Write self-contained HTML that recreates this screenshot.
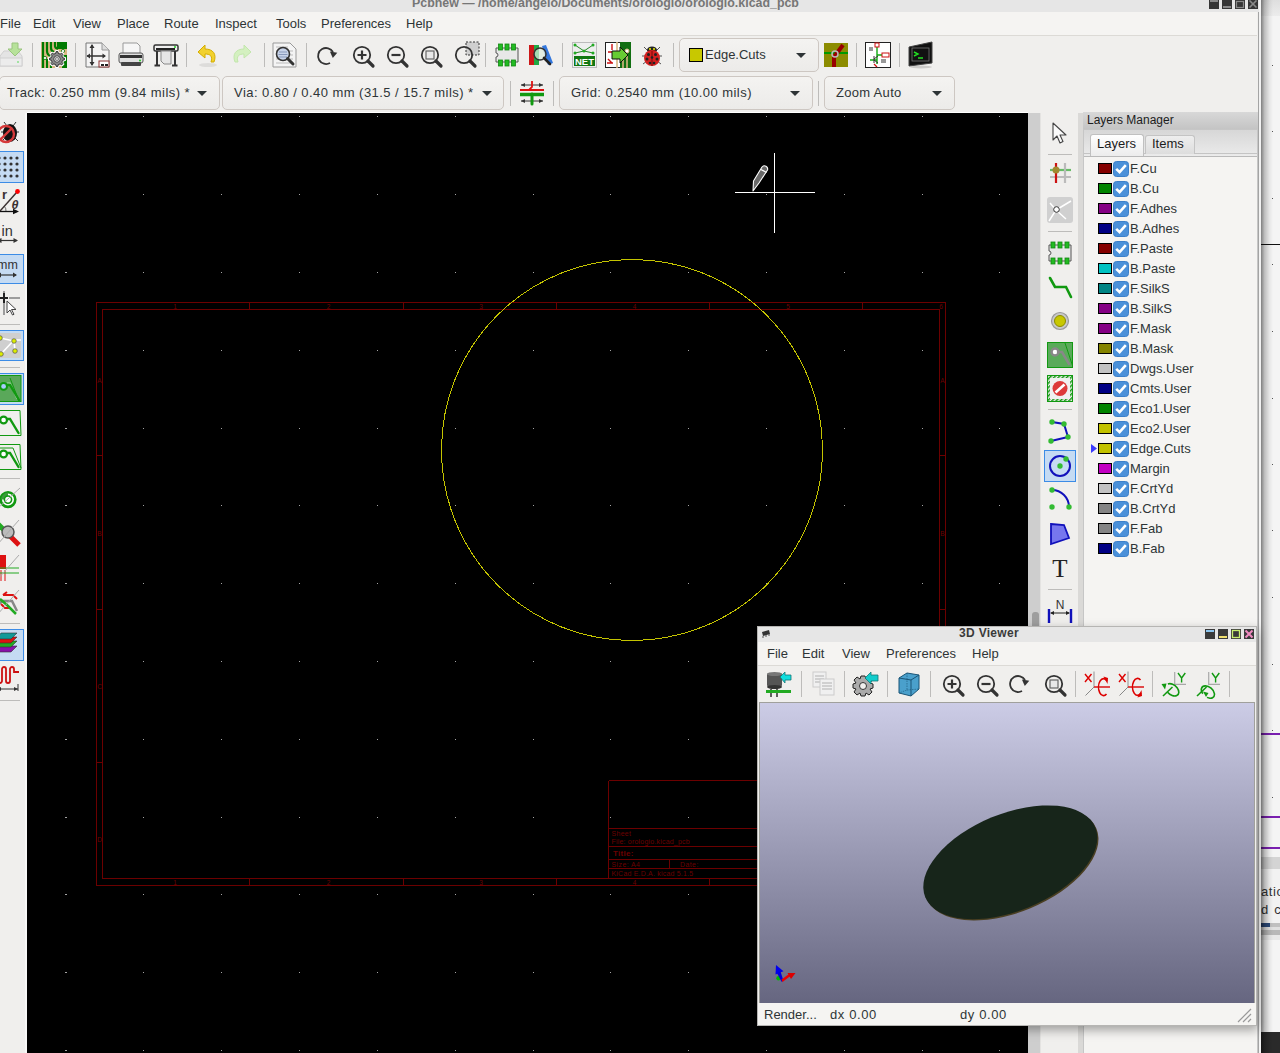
<!DOCTYPE html>
<html><head><meta charset="utf-8"><style>
html,body{margin:0;padding:0;width:1280px;height:1053px;overflow:hidden;background:#fff;font-family:"Liberation Sans", sans-serif;}
*{box-sizing:border-box;}
</style></head><body>
<div style="position:absolute;left:1259px;top:0px;width:21px;height:1053px;background:#f4f4f4"></div>
<div style="position:absolute;left:1261px;top:0px;width:19px;height:16px;background:linear-gradient(#dedede,#ececec)"></div>
<div style="position:absolute;left:1261px;top:244px;width:19px;height:1px;background:#111"></div>
<div style="position:absolute;left:1272px;top:65px;width:1px;height:1px;background:#555"></div>
<div style="position:absolute;left:1272px;top:131px;width:1px;height:1px;background:#555"></div>
<div style="position:absolute;left:1272px;top:198px;width:1px;height:1px;background:#555"></div>
<div style="position:absolute;left:1272px;top:264px;width:1px;height:1px;background:#555"></div>
<div style="position:absolute;left:1272px;top:331px;width:1px;height:1px;background:#555"></div>
<div style="position:absolute;left:1272px;top:398px;width:1px;height:1px;background:#555"></div>
<div style="position:absolute;left:1272px;top:464px;width:1px;height:1px;background:#555"></div>
<div style="position:absolute;left:1272px;top:530px;width:1px;height:1px;background:#555"></div>
<div style="position:absolute;left:1272px;top:597px;width:1px;height:1px;background:#555"></div>
<div style="position:absolute;left:1272px;top:664px;width:1px;height:1px;background:#555"></div>
<div style="position:absolute;left:1272px;top:730px;width:1px;height:1px;background:#555"></div>
<div style="position:absolute;left:1272px;top:797px;width:1px;height:1px;background:#555"></div>
<div style="position:absolute;left:1261px;top:733px;width:19px;height:2px;background:#7a1fb0"></div>
<div style="position:absolute;left:1261px;top:816px;width:19px;height:2px;background:#7a1fb0"></div>
<div style="position:absolute;left:1261px;top:847px;width:19px;height:2px;background:#7a1fb0"></div>
<div style="position:absolute;left:1261px;top:857px;width:19px;height:12px;background:#d4d4d4"></div>
<div style="position:absolute;left:1261px;top:869px;width:19px;height:60px;background:#f2f2f2"></div>
<div style="position:absolute;left:1261px;top:884px;font-size:13px;line-height:15px;color:#333;white-space:nowrap;letter-spacing:0.6px">atio</div>
<div style="position:absolute;left:1261px;top:902px;font-size:13px;line-height:15px;color:#333;white-space:nowrap;letter-spacing:1.2px">d c</div>
<div style="position:absolute;left:1261px;top:923px;width:19px;height:4px;background:#c0c0c0"></div>
<div style="position:absolute;left:1261px;top:923px;width:9px;height:4px;background:#2c4a7a"></div>
<div style="position:absolute;left:1261px;top:927px;width:19px;height:3px;background:#e0e0e0"></div>
<div style="position:absolute;left:1261px;top:930px;width:19px;height:5px;background:#b8b8b8"></div>
<div style="position:absolute;left:1261px;top:935px;width:19px;height:5px;background:#e8e8e8"></div>
<div style="position:absolute;left:1261px;top:1032px;width:19px;height:21px;background:#2a2a2a"></div>
<div style="position:absolute;left:1261px;top:0px;width:12px;height:1053px;background:linear-gradient(to right,rgba(0,0,0,0.48),rgba(0,0,0,0.22) 30%,rgba(0,0,0,0.06) 70%,rgba(0,0,0,0))"></div>
<div style="position:absolute;left:0px;top:0px;width:1259px;height:1053px;background:#f0efed"></div>
<div style="position:absolute;left:1258px;top:0px;width:1px;height:1053px;background:#a4a4a4"></div>
<div style="position:absolute;left:1259px;top:0px;width:2px;height:1053px;background:#f2f2f2"></div>
<div style="position:absolute;left:0px;top:0px;width:1259px;height:12px;background:#e6e6e6;overflow:hidden"></div>
<div style="position:absolute;left:412px;top:-4px;font-size:12.4px;line-height:14.4px;color:#767676;white-space:nowrap;font-weight:bold;">Pcbnew — /home/angelo/Documents/orologio/orologio.kicad_pcb</div>
<svg style="position:absolute;left:1209px;top:0px;" width="50" height="9" viewBox="0 0 50 9"><rect x="0" y="0" width="10" height="9" fill="#363636"/><rect x="1" y="0" width="8" height="2" fill="#8a8a8a"/><rect x="13" y="0" width="10" height="9" fill="#363636"/><rect x="14" y="6" width="8" height="2" fill="#8a8a8a"/><rect x="26" y="0" width="10" height="9" fill="#363636"/><rect x="27.5" y="1.5" width="7" height="6" fill="none" stroke="#8a8a8a" stroke-width="1.2"/><rect x="39" y="0" width="10" height="9" fill="#363636"/><path d="M40.5 0.5 L47.5 7.5 M47.5 0.5 L40.5 7.5" stroke="#8a8a8a" stroke-width="1.6"/></svg>
<div style="position:absolute;left:0px;top:12px;width:1257px;height:23px;background:#f5f4f2"></div>
<div style="position:absolute;left:0px;top:35px;width:1257px;height:1px;background:#dcdad6"></div>
<div style="position:absolute;left:0px;top:16px;font-size:13px;line-height:15px;color:#2e3436;white-space:nowrap;">File</div>
<div style="position:absolute;left:33px;top:16px;font-size:13px;line-height:15px;color:#2e3436;white-space:nowrap;">Edit</div>
<div style="position:absolute;left:73px;top:16px;font-size:13px;line-height:15px;color:#2e3436;white-space:nowrap;">View</div>
<div style="position:absolute;left:117px;top:16px;font-size:13px;line-height:15px;color:#2e3436;white-space:nowrap;">Place</div>
<div style="position:absolute;left:164px;top:16px;font-size:13px;line-height:15px;color:#2e3436;white-space:nowrap;">Route</div>
<div style="position:absolute;left:215px;top:16px;font-size:13px;line-height:15px;color:#2e3436;white-space:nowrap;">Inspect</div>
<div style="position:absolute;left:276px;top:16px;font-size:13px;line-height:15px;color:#2e3436;white-space:nowrap;">Tools</div>
<div style="position:absolute;left:321px;top:16px;font-size:13px;line-height:15px;color:#2e3436;white-space:nowrap;">Preferences</div>
<div style="position:absolute;left:406px;top:16px;font-size:13px;line-height:15px;color:#2e3436;white-space:nowrap;">Help</div>
<svg style="position:absolute;left:-2px;top:42px;" width="26" height="26" viewBox="0 0 26 26"><path d="M2 14 L6 9 H20 L24 14 V24 H2Z" fill="#e4e4e4" stroke="#cfcfcf"/><rect x="2" y="16" width="22" height="8" fill="#ececec" stroke="#d0d0d0"/><circle cx="20" cy="20" r="1" fill="#8be08b"/><path d="M14 1 H20 V7 H24 L17 14 L10 7 H14Z" fill="#b7e29a" stroke="#9ac47f" stroke-width="1"/></svg>
<div style="position:absolute;left:32px;top:43px;width:1px;height:24px;background:#bdbcba"></div>
<svg style="position:absolute;left:41px;top:42px;" width="26" height="26" viewBox="0 0 26 26"><rect x="0" y="0" width="26" height="26" fill="#d9b783"/><path d="M2 0 V26 M6 0 V9 Q6 13 10 14 M10 0 V6 Q10 9 13 10 M14 0 V4 Q14 6 17 7" stroke="#007a00" stroke-width="2.2" fill="none"/><path d="M6 17 V26 M10 20 V26" stroke="#007a00" stroke-width="2"/><rect x="16" y="0" width="10" height="7" fill="#007a00"/><rect x="21" y="13" width="5" height="13" fill="#007a00"/><circle cx="4" cy="16" r="1.6" fill="#fff" stroke="#007a00" stroke-width="0.8"/><circle cx="22" cy="9" r="1.6" fill="#fff" stroke="#007a00" stroke-width="0.8"/><path d="M22.05 15.65 L23.95 16.12 L23.95 17.88 L22.05 18.35 L21.23 20.32 L22.24 22.00 L21.00 23.24 L19.32 22.23 L17.35 23.05 L16.88 24.95 L15.12 24.95 L14.65 23.05 L12.68 22.23 L11.00 23.24 L9.76 22.00 L10.77 20.32 L9.95 18.35 L8.05 17.88 L8.05 16.12 L9.95 15.65 L10.77 13.68 L9.76 12.00 L11.00 10.76 L12.68 11.77 L14.65 10.95 L15.12 9.05 L16.88 9.05 L17.35 10.95 L19.32 11.77 L21.00 10.76 L22.24 12.00 L21.23 13.68Z" fill="#fff" stroke="#fff" stroke-width="2.2" stroke-linejoin="round"/><path d="M21.66 15.73 L23.45 16.18 L23.45 17.82 L21.66 18.27 L20.90 20.11 L21.85 21.69 L20.69 22.85 L19.11 21.90 L17.27 22.66 L16.82 24.45 L15.18 24.45 L14.73 22.66 L12.89 21.90 L11.31 22.85 L10.15 21.69 L11.10 20.11 L10.34 18.27 L8.55 17.82 L8.55 16.18 L10.34 15.73 L11.10 13.89 L10.15 12.31 L11.31 11.15 L12.89 12.10 L14.73 11.34 L15.18 9.55 L16.82 9.55 L17.27 11.34 L19.11 12.10 L20.69 11.15 L21.85 12.31 L20.90 13.89Z" fill="#8a8a8a" stroke="#222" stroke-width="0.9" stroke-linejoin="round"/><circle cx="16" cy="17" r="3.2" fill="#fff" stroke="#222" stroke-width="0.8"/><rect x="14.8" y="15.8" width="2.4" height="2.4" fill="none" stroke="#333" stroke-width="0.7"/></svg>
<div style="position:absolute;left:75px;top:43px;width:1px;height:24px;background:#bdbcba"></div>
<svg style="position:absolute;left:85px;top:42px;" width="26" height="26" viewBox="0 0 26 26"><path d="M1 1 H17 L24 8 V25 H1Z" fill="#f4f4f4" stroke="#777"/><path d="M17 1 V8 H24" fill="#ddd" stroke="#999"/><path d="M7 3 V23 M2 14 H20" stroke="#333" stroke-width="1.5"/><path d="M7 2 L4.5 6 H9.5Z M7 24 L4.5 20 H9.5Z M1.5 14 L5 11.5 V16.5Z M21 14 L17.5 11.5 V16.5Z" fill="#333"/><rect x="14" y="19" width="10" height="6" fill="#fff" stroke="#8a3030"/><path d="M16 23 H19 M20 23 H23" stroke="#222" stroke-width="2"/></svg>
<svg style="position:absolute;left:118px;top:42px;" width="26" height="26" viewBox="0 0 26 26"><path d="M5 1 H19 L22 4 V12 H5Z" fill="#f6f6f6" stroke="#999"/><rect x="1" y="11" width="24" height="10" rx="2" fill="#e0e0e0" stroke="#555"/><rect x="2" y="13" width="22" height="3" fill="#333"/><rect x="3" y="20" width="20" height="4" rx="1" fill="#444"/><circle cx="22" cy="18.5" r="1" fill="#2c2"/></svg>
<svg style="position:absolute;left:153px;top:42px;" width="26" height="26" viewBox="0 0 26 26"><rect x="1" y="3" width="24" height="6" rx="1.5" fill="#f0f0f0" stroke="#333" stroke-width="1.5"/><rect x="3" y="6" width="19" height="2" fill="#222"/><circle cx="22" cy="5" r="1" fill="#2c2"/><path d="M4 9 V23 M22 9 V23 M1.5 23.5 H7 M19 23.5 H24.5" stroke="#333" stroke-width="2"/><path d="M8 9 H18 V22 H11 L8 19Z" fill="#e6e6e6" stroke="#888"/></svg>
<div style="position:absolute;left:186px;top:43px;width:1px;height:24px;background:#bdbcba"></div>
<svg style="position:absolute;left:196px;top:42px;" width="24" height="26" viewBox="0 0 24 26"><ellipse cx="12" cy="23" rx="9" ry="2" fill="#000" opacity="0.08"/><path d="M2 10 L9 3 V7 C17 7 21 12 18 20 L15 20 C17 14 14 12 9 12 V16Z" fill="#f2d12e" stroke="#d4ad00" stroke-width="1"/></svg>
<svg style="position:absolute;left:229px;top:42px;" width="24" height="26" viewBox="0 0 24 26"><path d="M22 10 L15 3 V7 C7 7 3 12 6 20 L9 20 C7 14 10 12 15 12 V16Z" fill="#d4f0c0" stroke="#c2e6ac" stroke-width="1"/></svg>
<div style="position:absolute;left:264px;top:43px;width:1px;height:24px;background:#bdbcba"></div>
<svg style="position:absolute;left:272px;top:42px;" width="26" height="26" viewBox="0 0 26 26"><path d="M1 1 H18 L24 7 V25 H1Z" fill="#f4f4f4" stroke="#999"/><path d="M4 5 H16 M4 9 H21 M4 13 H21 M4 17 H21 M4 21 H21" stroke="#bbb"/><circle cx="11" cy="12" r="6.5" fill="#c8d4ea" stroke="#333" stroke-width="1.6"/><path d="M7 10 H15 M6.5 12.5 H15.5 M7 15 H15" stroke="#8899bb" stroke-width="1"/><path d="M15.5 16.5 L21 22" stroke="#333" stroke-width="3" stroke-linecap="round"/></svg>
<div style="position:absolute;left:306px;top:43px;width:1px;height:24px;background:#bdbcba"></div>
<svg style="position:absolute;left:316px;top:45px;" width="24" height="22" viewBox="0 0 24 22"><path d="M14 18 A8 8 0 1 1 17 7" fill="none" stroke="#333" stroke-width="1.8"/><path d="M13.5 7 H21 L17.5 13Z" fill="#333" transform="rotate(10 17 9)"/></svg>
<svg style="position:absolute;left:352px;top:45px;" width="24" height="24" viewBox="0 0 24 24"><circle cx="10" cy="10" r="8.2" fill="none" stroke="#333" stroke-width="1.8"/><path d="M5.5 10 H14.5 M10 5.5 V14.5" stroke="#333" stroke-width="2.2"/><path d="M16 16 L21 21" stroke="#333" stroke-width="3.2" stroke-linecap="round"/></svg>
<svg style="position:absolute;left:386px;top:45px;" width="24" height="24" viewBox="0 0 24 24"><circle cx="10" cy="10" r="8.2" fill="none" stroke="#333" stroke-width="1.8"/><path d="M5.5 10 H14.5" stroke="#333" stroke-width="2.2"/><path d="M16 16 L21 21" stroke="#333" stroke-width="3.2" stroke-linecap="round"/></svg>
<svg style="position:absolute;left:420px;top:45px;" width="24" height="24" viewBox="0 0 24 24"><circle cx="10" cy="10" r="8.2" fill="none" stroke="#333" stroke-width="1.8"/><rect x="6" y="6" width="8" height="8" fill="#e8e8e8" stroke="#666" stroke-width="1.2"/><path d="M16 16 L21 21" stroke="#333" stroke-width="3.2" stroke-linecap="round"/></svg>
<svg style="position:absolute;left:454px;top:41px;" width="26" height="28" viewBox="0 0 26 28"><rect x="12" y="1" width="13" height="13" fill="#cfcfcf" stroke="#333" stroke-dasharray="2 1.5"/><circle cx="10" cy="14" r="8.2" fill="none" stroke="#333" stroke-width="1.8"/><path d="M16 20 L21 25" stroke="#333" stroke-width="3.2" stroke-linecap="round"/></svg>
<div style="position:absolute;left:485px;top:43px;width:1px;height:24px;background:#bdbcba"></div>
<svg style="position:absolute;left:494px;top:43px;" width="26" height="24" viewBox="0 0 26 24"><path d="M2 5 H24 V19 H2 V14 A2 2 0 0 0 2 10Z" fill="#e8e8e8" stroke="#555" stroke-width="1"/><g fill="#22bb22" stroke="#128812" stroke-width="0.8"><rect x="4.5" y="1" width="4" height="6"/><rect x="11" y="1" width="4" height="6"/><rect x="17.5" y="1" width="4" height="6"/><rect x="4.5" y="17" width="4" height="6"/><rect x="11" y="17" width="4" height="6"/><rect x="17.5" y="17" width="4" height="6"/></g></svg>
<svg style="position:absolute;left:529px;top:43px;" width="26" height="24" viewBox="0 0 26 24"><rect x="0" y="2" width="5" height="20" fill="#cc1818"/><rect x="5" y="2" width="5" height="20" fill="#22aa44"/><path d="M13 3 L17 2 L24 20 L19 22Z" fill="#3377dd"/><circle cx="11" cy="11" r="6" fill="#ddeedd" fill-opacity="0.7" stroke="#333" stroke-width="1.5"/><path d="M15 15 L21 21" stroke="#222" stroke-width="2.6" stroke-linecap="round"/></svg>
<div style="position:absolute;left:562px;top:43px;width:1px;height:24px;background:#bdbcba"></div>
<svg style="position:absolute;left:572px;top:42px;" width="25" height="26" viewBox="0 0 25 26"><rect x="0.5" y="0.5" width="24" height="25" fill="#eeeeee" stroke="#bbb"/><path d="M3 3 L12 9 L21 3 M3 11 L12 9 L21 11" stroke="#228822" stroke-width="1" fill="none"/><circle cx="3" cy="3" r="1.5" fill="#22aa22"/><circle cx="21" cy="3" r="1.5" fill="#22aa22"/><circle cx="3" cy="11" r="1.5" fill="#22aa22"/><circle cx="21" cy="11" r="1.5" fill="#22aa22"/><circle cx="12" cy="9" r="1.5" fill="#22aa22"/><rect x="2" y="14" width="21" height="10" fill="#117711"/><text x="12.5" y="23" font-size="9.5" font-weight="bold" fill="#fff" text-anchor="middle" font-family="Liberation Sans">NET</text></svg>
<svg style="position:absolute;left:605px;top:42px;" width="26" height="26" viewBox="0 0 26 26"><rect x="0.5" y="0.5" width="25" height="25" fill="#fff" stroke="#222"/><rect x="15" y="0" width="11" height="26" fill="#116e11"/><path d="M12 0 V26 M18 14 V26 M22 14 V26" stroke="#d9b783" stroke-width="1.6"/><circle cx="22" cy="9" r="2" fill="#fff" stroke="#d9b783"/><path d="M7 2 V8 M3 10 H9 M3 17 L7 21 M2 21 H8" stroke="#cc1111" stroke-width="1.4"/><path d="M7 9 H15 V5 L23 13 L15 21 V17 H7Z" fill="#66cc33" stroke="#111" stroke-width="1"/></svg>
<svg style="position:absolute;left:640px;top:43px;" width="24" height="24" viewBox="0 0 24 24"><path d="M4 4 L8 8 M20 4 L16 8 M2 13 H6 M22 13 H18 M3 21 L7 18 M21 21 L17 18" stroke="#555" stroke-width="1"/><ellipse cx="12" cy="7" rx="5" ry="3.5" fill="#222"/><circle cx="10" cy="6" r="1" fill="#ee0"/><circle cx="14" cy="6" r="1" fill="#ee0"/><ellipse cx="12" cy="15" rx="8" ry="8" fill="#d42020"/><path d="M12 8 V23" stroke="#600" stroke-width="0.8"/><g fill="#222"><circle cx="8.5" cy="11.5" r="1.5"/><circle cx="15.5" cy="11.5" r="1.5"/><circle cx="7" cy="16" r="1.5"/><circle cx="17" cy="16" r="1.5"/><circle cx="10" cy="20" r="1.3"/><circle cx="14" cy="20" r="1.3"/><circle cx="12" cy="14.5" r="1.3"/></g></svg>
<div style="position:absolute;left:673px;top:43px;width:1px;height:24px;background:#bdbcba"></div>
<div style="position:absolute;left:679px;top:38px;width:140px;height:34px;border:1px solid #cdc7c2;border-radius:5px;background:linear-gradient(#f4f3f1,#ecebe9)"></div>
<div style="position:absolute;left:689px;top:48px;width:14px;height:14px;background:#c8c800;border:1px solid #000"></div>
<div style="position:absolute;left:705px;top:47px;font-size:13px;line-height:15px;color:#2e3436;white-space:nowrap;">Edge.Cuts</div>
<svg style="position:absolute;left:796px;top:53px;" width="10" height="5" viewBox="0 0 10 5"><path d="M0 0 H10 L5 5Z" fill="#2e3436"/></svg>
<svg style="position:absolute;left:824px;top:43px;" width="24" height="24" viewBox="0 0 24 24"><rect x="0" y="0" width="24" height="24" fill="#8c8c00"/><path d="M0 10 H24" stroke="#009900" stroke-width="2"/><path d="M10 24 V14 L19 2" stroke="#990000" stroke-width="4" fill="none"/><circle cx="11" cy="11" r="3" fill="none" stroke="#bbbbbb" stroke-width="1.5"/></svg>
<div style="position:absolute;left:856px;top:43px;width:1px;height:24px;background:#bdbcba"></div>
<svg style="position:absolute;left:865px;top:42px;" width="26" height="26" viewBox="0 0 26 26"><rect x="0.5" y="0.5" width="25" height="25" fill="#fff" stroke="#222"/><path d="M12 3 V22 M5 18 H12 M12 13 H17" stroke="#11aa11" stroke-width="1.4"/><rect x="10" y="1" width="4" height="4" fill="#fff" stroke="#cc1111"/><rect x="17" y="11" width="7" height="4" fill="#fff" stroke="#cc1111"/><path d="M9 14 V21 M9 17 L13 14 M9 18 L13 21 M4 6 H8 M4 8 H8 M16 18 H21 M16 20 H21" stroke="#333" stroke-width="1"/><path d="M9 22 L12 25" stroke="#cc1111" stroke-width="1.2"/></svg>
<div style="position:absolute;left:899px;top:43px;width:1px;height:24px;background:#bdbcba"></div>
<svg style="position:absolute;left:907px;top:41px;" width="28" height="28" viewBox="0 0 28 28"><path d="M2 6 L25 1 V22 L2 25Z" fill="#111" stroke="#444"/><rect x="5" y="7" width="17" height="13" fill="#111" stroke="#777" stroke-width="0.8"/><path d="M7 11 L11 13 L7 15 M11 17 H16" stroke="#22dd22" stroke-width="1.4" fill="none"/><ellipse cx="14" cy="26" rx="11" ry="1.5" fill="#000" opacity="0.15"/></svg>
<div style="position:absolute;left:-1px;top:76px;width:221px;height:34px;border:1px solid #cdc7c2;border-radius:5px;background:linear-gradient(#f4f3f1,#ecebe9)"></div>
<div style="position:absolute;left:7px;top:85px;font-size:13px;line-height:15px;color:#2e3436;white-space:nowrap;letter-spacing:0.45px">Track: 0.250 mm (9.84 mils) *</div>
<svg style="position:absolute;left:197px;top:91px;" width="10" height="5" viewBox="0 0 10 5"><path d="M0 0 H10 L5 5Z" fill="#2e3436"/></svg>
<div style="position:absolute;left:222px;top:76px;width:282px;height:34px;border:1px solid #cdc7c2;border-radius:5px;background:linear-gradient(#f4f3f1,#ecebe9)"></div>
<div style="position:absolute;left:234px;top:85px;font-size:13px;line-height:15px;color:#2e3436;white-space:nowrap;letter-spacing:0.45px">Via: 0.80 / 0.40 mm (31.5 / 15.7 mils) *</div>
<svg style="position:absolute;left:482px;top:91px;" width="10" height="5" viewBox="0 0 10 5"><path d="M0 0 H10 L5 5Z" fill="#2e3436"/></svg>
<div style="position:absolute;left:510px;top:81px;width:1px;height:25px;background:#bdbcba"></div>
<svg style="position:absolute;left:519px;top:79px;" width="26" height="28" viewBox="0 0 26 28"><path d="M2 6 H24 M2 22 H24" stroke="#333" stroke-width="1"/><path d="M2 6 L6 4 V8Z M24 6 L20 4 V8Z M2 22 L6 20 V24Z M24 22 L20 20 V24Z" fill="#333"/><path d="M13 2 V8 L10 11" stroke="#dd1111" stroke-width="1.8" fill="none"/><path d="M1 11 H25" stroke="#dd1111" stroke-width="2"/><path d="M1 15.5 H25" stroke="#119911" stroke-width="3.5"/><path d="M13 15 V25" stroke="#119911" stroke-width="3" stroke-linecap="round"/></svg>
<div style="position:absolute;left:553px;top:81px;width:1px;height:25px;background:#bdbcba"></div>
<div style="position:absolute;left:559px;top:76px;width:254px;height:34px;border:1px solid #cdc7c2;border-radius:5px;background:linear-gradient(#f4f3f1,#ecebe9)"></div>
<div style="position:absolute;left:571px;top:85px;font-size:13px;line-height:15px;color:#2e3436;white-space:nowrap;letter-spacing:0.45px">Grid: 0.2540 mm (10.00 mils)</div>
<svg style="position:absolute;left:790px;top:91px;" width="10" height="5" viewBox="0 0 10 5"><path d="M0 0 H10 L5 5Z" fill="#2e3436"/></svg>
<div style="position:absolute;left:818px;top:81px;width:1px;height:25px;background:#bdbcba"></div>
<div style="position:absolute;left:824px;top:76px;width:131px;height:34px;border:1px solid #cdc7c2;border-radius:5px;background:linear-gradient(#f4f3f1,#ecebe9)"></div>
<div style="position:absolute;left:836px;top:85px;font-size:13px;line-height:15px;color:#2e3436;white-space:nowrap;letter-spacing:0.3px">Zoom Auto</div>
<svg style="position:absolute;left:932px;top:91px;" width="10" height="5" viewBox="0 0 10 5"><path d="M0 0 H10 L5 5Z" fill="#2e3436"/></svg>
<div style="position:absolute;left:25px;top:113px;width:2px;height:940px;background:#f8f8f7"></div>
<svg style="position:absolute;left:-4px;top:119px;" width="26" height="26" viewBox="0 0 26 26"><path d="M8 3 L11 7 M20 3 L17 7 M5 13 H8 M23 13 H20 M6 22 L9 19 M22 22 L19 19" stroke="#333" stroke-width="1"/><ellipse cx="14" cy="14" rx="7" ry="9" fill="#111"/><circle cx="10" cy="15" r="8" fill="none" stroke="#d63a3a" stroke-width="2.4"/><path d="M4.5 20.5 L15.5 9.5" stroke="#d63a3a" stroke-width="2.4"/></svg>
<div style="position:absolute;left:-2px;top:151px;width:26px;height:32px;background:#c5dbf3;border:1px solid #3c8ce6"></div>
<svg style="position:absolute;left:-2px;top:153px;" width="26" height="28" viewBox="0 0 26 28"><g fill="#333"><circle cx="1" cy="5" r="1.6"/><circle cx="1" cy="11" r="1.6"/><circle cx="1" cy="17" r="1.6"/><circle cx="1" cy="23" r="1.6"/><circle cx="7" cy="5" r="1.6"/><circle cx="7" cy="11" r="1.6"/><circle cx="7" cy="17" r="1.6"/><circle cx="7" cy="23" r="1.6"/><circle cx="13" cy="5" r="1.6"/><circle cx="13" cy="11" r="1.6"/><circle cx="13" cy="17" r="1.6"/><circle cx="13" cy="23" r="1.6"/><circle cx="19" cy="5" r="1.6"/><circle cx="19" cy="11" r="1.6"/><circle cx="19" cy="17" r="1.6"/><circle cx="19" cy="23" r="1.6"/></g></svg>
<svg style="position:absolute;left:-3px;top:188px;" width="26" height="28" viewBox="0 0 26 28"><text x="5" y="11" font-size="13" font-weight="bold" fill="#3a3030" font-family="Liberation Sans">r</text><path d="M3 23 L20 4" stroke="#3a3030" stroke-width="1.5"/><circle cx="20.5" cy="3.5" r="2.4" fill="#f00"/><text x="14.5" y="21" font-size="12.5" font-weight="bold" font-style="italic" fill="#3a3030" font-family="Liberation Sans">θ</text><path d="M0 23.5 H20" stroke="#111" stroke-width="1.3"/><path d="M22 23.5 L16 20.8 V26.2Z" fill="#111"/><path d="M9 23 A6 6 0 0 0 7 18" fill="none" stroke="#333" stroke-width="0.7"/></svg>
<svg style="position:absolute;left:-3px;top:222px;" width="26" height="24" viewBox="0 0 26 24"><text x="4.5" y="13.5" font-size="14.5" fill="#333" font-family="Liberation Sans">in</text><path d="M1 18.5 H20" stroke="#333" stroke-width="1.2"/><path d="M0 18.5 L4.5 16 V21Z M21 18.5 L16.5 16 V21Z" fill="#333"/></svg>
<div style="position:absolute;left:-2px;top:254px;width:26px;height:30px;background:#c5dbf3;border:1px solid #3c8ce6"></div>
<svg style="position:absolute;left:-3px;top:255px;" width="26" height="28" viewBox="0 0 26 28"><text x="0" y="14" font-size="12.5" fill="#333" font-family="Liberation Sans">mm</text><path d="M1 20 H19" stroke="#333" stroke-width="1.2"/><path d="M0 20 L4 17.5 V22.5Z M20 20 L16 17.5 V22.5Z" fill="#333"/></svg>
<svg style="position:absolute;left:-2px;top:289px;" width="26" height="28" viewBox="0 0 26 28"><path d="M6 2 V26" stroke="#888" stroke-width="1.6"/><path d="M6 4 V14 M0 9 H10" stroke="#222" stroke-width="2"/><path d="M11 9 H22" stroke="#888" stroke-width="1.6"/><path d="M9 12 V24 L12 21 L14.5 26 L16 25.3 L13.5 20.5 H18Z" fill="#fff" stroke="#444" stroke-width="1"/></svg>
<div style="position:absolute;left:0px;top:324px;width:20px;height:1px;background:#bdbcba"></div>
<div style="position:absolute;left:-2px;top:330px;width:26px;height:31px;background:#c5dbf3;border:1px solid #3c8ce6"></div>
<svg style="position:absolute;left:-2px;top:332px;" width="26" height="28" viewBox="0 0 26 28"><rect x="0" y="1" width="23" height="25" rx="2" fill="#cfcfcf"/><path d="M2 6 L16 9 M3 22 L17 7 M16 9 L17 19 M14 8 L23 8" stroke="#fff" stroke-width="1.6"/><g fill="#ddee00" stroke="#555" stroke-width="0.7"><circle cx="2" cy="6" r="2.3"/><circle cx="16" cy="9" r="2.3"/><circle cx="3" cy="22" r="2.3"/><circle cx="17" cy="19" r="2.3"/></g></svg>
<div style="position:absolute;left:0px;top:367px;width:20px;height:1px;background:#bdbcba"></div>
<div style="position:absolute;left:-2px;top:373px;width:26px;height:32px;background:#c5dbf3;border:1px solid #3c8ce6"></div>
<svg style="position:absolute;left:-4px;top:374px;" width="26" height="30" viewBox="0 0 26 30"><rect x="-1" y="1.5" width="26" height="26" fill="#5aa85a" stroke="#119911"/><path d="M14 4 L23 27" stroke="#119911" stroke-width="1"/><path d="M11 9 H14 L21 25" fill="none" stroke="#a8d8a8" stroke-width="1.2"/><circle cx="7.6" cy="12.4" r="3.4" fill="#aaccff" stroke="#119911" stroke-width="2"/><path d="M11 11 H14 L23 26" fill="none" stroke="#119911" stroke-width="2.4" stroke-linecap="round"/></svg>
<svg style="position:absolute;left:-4px;top:408px;" width="26" height="30" viewBox="0 0 26 30"><path d="M-1 2.5 H24 L25 27.5 H-1" fill="none" stroke="#119911" stroke-width="1"/><circle cx="7.6" cy="12" r="3.4" fill="#fff" stroke="#119911" stroke-width="2.2"/><path d="M11 11 H14 L22.5 25" fill="none" stroke="#119911" stroke-width="2.4" stroke-linecap="round"/></svg>
<svg style="position:absolute;left:-4px;top:442px;" width="26" height="30" viewBox="0 0 26 30"><path d="M-1 2.5 H24 L25 27.5 H-1" fill="none" stroke="#119911" stroke-width="1"/><path d="M-1 6 H17 L25 26" fill="none" stroke="#119911" stroke-width="1"/><circle cx="7.6" cy="12" r="3.4" fill="#fff" stroke="#119911" stroke-width="2.2"/><path d="M11 11 H14 L22.5 25" fill="none" stroke="#119911" stroke-width="2.4" stroke-linecap="round"/></svg>
<div style="position:absolute;left:0px;top:478px;width:20px;height:1px;background:#bdbcba"></div>
<svg style="position:absolute;left:-2px;top:486px;" width="26" height="26" viewBox="0 0 26 26"><circle cx="10" cy="13.6" r="7.3" fill="#fff" stroke="#119911" stroke-width="2.6"/><path d="M3 13.6 A7 7 0 0 1 10 6.6 V10 A3.6 3.6 0 0 0 6.4 13.6Z" fill="#3a9a3a"/><circle cx="10" cy="13.6" r="3.6" fill="none" stroke="#119911" stroke-width="1.6"/><path d="M0 22 L22 2" stroke="#aaa" stroke-width="1"/></svg>
<svg style="position:absolute;left:-3px;top:519px;" width="26" height="30" viewBox="0 0 26 30"><path d="M0 4 L14 18" stroke="#22aa22" stroke-width="5"/><path d="M12 16 L22 26" stroke="#dd1111" stroke-width="5"/><circle cx="11" cy="13" r="6" fill="#bbb" stroke="#555" stroke-width="1.5"/><path d="M0 26 L22 1" stroke="#aaa" stroke-width="1"/></svg>
<svg style="position:absolute;left:-3px;top:554px;" width="26" height="30" viewBox="0 0 26 30"><rect x="3" y="1" width="6" height="14" fill="#dd1111"/><path d="M4 16 V27 M8 16 V27" stroke="#dd1111" stroke-width="1"/><path d="M0 14 H22 M0 19 H22" stroke="#22aa22" stroke-width="1.2"/><path d="M0 26 L22 1" stroke="#aaa" stroke-width="1"/></svg>
<svg style="position:absolute;left:-3px;top:589px;" width="26" height="28" viewBox="0 0 26 28"><path d="M6 6 L10 3 M6 6 L16 6 L20 10 M4 15 L8 19 L12 19" stroke="#dd1111" stroke-width="2" fill="none"/><path d="M0 17 L5 12 L15 12 L20 22" stroke="#888" stroke-width="2.5" fill="none"/><path d="M3 10 L10 16 L14 20 L19 25" stroke="#22aa22" stroke-width="2.5" fill="none"/><path d="M0 26 L22 1" stroke="#aaa" stroke-width="1"/></svg>
<div style="position:absolute;left:0px;top:623px;width:20px;height:1px;background:#bdbcba"></div>
<div style="position:absolute;left:-2px;top:629px;width:26px;height:32px;background:#c5dbf3;border:1px solid #3c8ce6"></div>
<svg style="position:absolute;left:-3px;top:630px;" width="26" height="30" viewBox="0 0 26 30"><path d="M4 16 L20 16 L14 22 L0 22Z" fill="#8811aa" stroke="#333" stroke-width="0.6"/><path d="M4 11 L20 11 L14 17 L0 17Z" fill="#22aa22" stroke="#333" stroke-width="0.6"/><path d="M4 7 L20 7 L14 13 L0 13Z" fill="#dd1111" stroke="#333" stroke-width="0.6"/><path d="M4 3 L20 3 L14 9 L0 9Z" fill="#119999" stroke="#333" stroke-width="0.6"/></svg>
<svg style="position:absolute;left:-3px;top:664px;" width="26" height="30" viewBox="0 0 26 30"><path d="M1 11 V17 A2 2 0 0 0 5 17 V5 A2 2 0 0 1 9 5 V17 A2 2 0 0 0 13 17 V5 A2 2 0 0 1 17 5 V8 H22" fill="none" stroke="#cc1111" stroke-width="1.8"/><path d="M0 25 H21 M21 20 V27" stroke="#333" stroke-width="1"/><path d="M0 25 L4 23 V27Z M21 25 L17 23 V27Z" fill="#333"/></svg>
<div style="position:absolute;left:0px;top:700px;width:20px;height:1px;background:#bdbcba"></div>
<div style="position:absolute;left:27px;top:112px;width:1001px;height:1px;background:#ffffff"></div>
<div style="position:absolute;left:27px;top:113px;width:1001px;height:940px;background:#000000"></div>
<svg style="position:absolute;left:27px;top:113px" width="1001" height="940" viewBox="0 0 1001 940" shape-rendering="crispEdges"><rect x="38" y="3" width="2" height="1" fill="#a4a4a4"/><rect x="116" y="3" width="1" height="1" fill="#a4a4a4"/><rect x="194" y="3" width="1" height="1" fill="#a4a4a4"/><rect x="272" y="3" width="1" height="1" fill="#a4a4a4"/><rect x="350" y="3" width="1" height="1" fill="#a4a4a4"/><rect x="428" y="3" width="1" height="1" fill="#a4a4a4"/><rect x="506" y="3" width="1" height="1" fill="#a4a4a4"/><rect x="583" y="3" width="1" height="1" fill="#a4a4a4"/><rect x="661" y="3" width="1" height="1" fill="#a4a4a4"/><rect x="739" y="3" width="1" height="1" fill="#a4a4a4"/><rect x="817" y="3" width="1" height="1" fill="#a4a4a4"/><rect x="895" y="3" width="1" height="1" fill="#a4a4a4"/><rect x="972" y="3" width="1" height="1" fill="#a4a4a4"/><rect x="38" y="81" width="2" height="1" fill="#a4a4a4"/><rect x="116" y="81" width="1" height="1" fill="#a4a4a4"/><rect x="194" y="81" width="1" height="1" fill="#a4a4a4"/><rect x="272" y="81" width="1" height="1" fill="#a4a4a4"/><rect x="350" y="81" width="1" height="1" fill="#a4a4a4"/><rect x="428" y="81" width="1" height="1" fill="#a4a4a4"/><rect x="506" y="81" width="1" height="1" fill="#a4a4a4"/><rect x="583" y="81" width="1" height="1" fill="#a4a4a4"/><rect x="661" y="81" width="1" height="1" fill="#a4a4a4"/><rect x="739" y="81" width="1" height="1" fill="#a4a4a4"/><rect x="817" y="81" width="1" height="1" fill="#a4a4a4"/><rect x="895" y="81" width="1" height="1" fill="#a4a4a4"/><rect x="972" y="81" width="1" height="1" fill="#a4a4a4"/><rect x="38" y="159" width="2" height="1" fill="#a4a4a4"/><rect x="116" y="159" width="1" height="1" fill="#a4a4a4"/><rect x="194" y="159" width="1" height="1" fill="#a4a4a4"/><rect x="272" y="159" width="1" height="1" fill="#a4a4a4"/><rect x="350" y="159" width="1" height="1" fill="#a4a4a4"/><rect x="428" y="159" width="1" height="1" fill="#a4a4a4"/><rect x="506" y="159" width="1" height="1" fill="#a4a4a4"/><rect x="583" y="159" width="1" height="1" fill="#a4a4a4"/><rect x="661" y="159" width="1" height="1" fill="#a4a4a4"/><rect x="739" y="159" width="1" height="1" fill="#a4a4a4"/><rect x="817" y="159" width="1" height="1" fill="#a4a4a4"/><rect x="895" y="159" width="1" height="1" fill="#a4a4a4"/><rect x="972" y="159" width="1" height="1" fill="#a4a4a4"/><rect x="38" y="237" width="2" height="1" fill="#a4a4a4"/><rect x="116" y="237" width="1" height="1" fill="#a4a4a4"/><rect x="194" y="237" width="1" height="1" fill="#a4a4a4"/><rect x="272" y="237" width="1" height="1" fill="#a4a4a4"/><rect x="350" y="237" width="1" height="1" fill="#a4a4a4"/><rect x="428" y="237" width="1" height="1" fill="#a4a4a4"/><rect x="506" y="237" width="1" height="1" fill="#a4a4a4"/><rect x="583" y="237" width="1" height="1" fill="#a4a4a4"/><rect x="661" y="237" width="1" height="1" fill="#a4a4a4"/><rect x="739" y="237" width="1" height="1" fill="#a4a4a4"/><rect x="817" y="237" width="1" height="1" fill="#a4a4a4"/><rect x="895" y="237" width="1" height="1" fill="#a4a4a4"/><rect x="972" y="237" width="1" height="1" fill="#a4a4a4"/><rect x="38" y="315" width="2" height="1" fill="#a4a4a4"/><rect x="116" y="315" width="1" height="1" fill="#a4a4a4"/><rect x="194" y="315" width="1" height="1" fill="#a4a4a4"/><rect x="272" y="315" width="1" height="1" fill="#a4a4a4"/><rect x="350" y="315" width="1" height="1" fill="#a4a4a4"/><rect x="428" y="315" width="1" height="1" fill="#a4a4a4"/><rect x="506" y="315" width="1" height="1" fill="#a4a4a4"/><rect x="583" y="315" width="1" height="1" fill="#a4a4a4"/><rect x="661" y="315" width="1" height="1" fill="#a4a4a4"/><rect x="739" y="315" width="1" height="1" fill="#a4a4a4"/><rect x="817" y="315" width="1" height="1" fill="#a4a4a4"/><rect x="895" y="315" width="1" height="1" fill="#a4a4a4"/><rect x="972" y="315" width="1" height="1" fill="#a4a4a4"/><rect x="38" y="392" width="2" height="1" fill="#a4a4a4"/><rect x="116" y="392" width="1" height="1" fill="#a4a4a4"/><rect x="194" y="392" width="1" height="1" fill="#a4a4a4"/><rect x="272" y="392" width="1" height="1" fill="#a4a4a4"/><rect x="350" y="392" width="1" height="1" fill="#a4a4a4"/><rect x="428" y="392" width="1" height="1" fill="#a4a4a4"/><rect x="506" y="392" width="1" height="1" fill="#a4a4a4"/><rect x="583" y="392" width="1" height="1" fill="#a4a4a4"/><rect x="661" y="392" width="1" height="1" fill="#a4a4a4"/><rect x="739" y="392" width="1" height="1" fill="#a4a4a4"/><rect x="817" y="392" width="1" height="1" fill="#a4a4a4"/><rect x="895" y="392" width="1" height="1" fill="#a4a4a4"/><rect x="972" y="392" width="1" height="1" fill="#a4a4a4"/><rect x="38" y="470" width="2" height="1" fill="#a4a4a4"/><rect x="116" y="470" width="1" height="1" fill="#a4a4a4"/><rect x="194" y="470" width="1" height="1" fill="#a4a4a4"/><rect x="272" y="470" width="1" height="1" fill="#a4a4a4"/><rect x="350" y="470" width="1" height="1" fill="#a4a4a4"/><rect x="428" y="470" width="1" height="1" fill="#a4a4a4"/><rect x="506" y="470" width="1" height="1" fill="#a4a4a4"/><rect x="583" y="470" width="1" height="1" fill="#a4a4a4"/><rect x="661" y="470" width="1" height="1" fill="#a4a4a4"/><rect x="739" y="470" width="1" height="1" fill="#a4a4a4"/><rect x="817" y="470" width="1" height="1" fill="#a4a4a4"/><rect x="895" y="470" width="1" height="1" fill="#a4a4a4"/><rect x="972" y="470" width="1" height="1" fill="#a4a4a4"/><rect x="38" y="548" width="2" height="1" fill="#a4a4a4"/><rect x="116" y="548" width="1" height="1" fill="#a4a4a4"/><rect x="194" y="548" width="1" height="1" fill="#a4a4a4"/><rect x="272" y="548" width="1" height="1" fill="#a4a4a4"/><rect x="350" y="548" width="1" height="1" fill="#a4a4a4"/><rect x="428" y="548" width="1" height="1" fill="#a4a4a4"/><rect x="506" y="548" width="1" height="1" fill="#a4a4a4"/><rect x="583" y="548" width="1" height="1" fill="#a4a4a4"/><rect x="661" y="548" width="1" height="1" fill="#a4a4a4"/><rect x="739" y="548" width="1" height="1" fill="#a4a4a4"/><rect x="817" y="548" width="1" height="1" fill="#a4a4a4"/><rect x="895" y="548" width="1" height="1" fill="#a4a4a4"/><rect x="972" y="548" width="1" height="1" fill="#a4a4a4"/><rect x="38" y="626" width="2" height="1" fill="#a4a4a4"/><rect x="116" y="626" width="1" height="1" fill="#a4a4a4"/><rect x="194" y="626" width="1" height="1" fill="#a4a4a4"/><rect x="272" y="626" width="1" height="1" fill="#a4a4a4"/><rect x="350" y="626" width="1" height="1" fill="#a4a4a4"/><rect x="428" y="626" width="1" height="1" fill="#a4a4a4"/><rect x="506" y="626" width="1" height="1" fill="#a4a4a4"/><rect x="583" y="626" width="1" height="1" fill="#a4a4a4"/><rect x="661" y="626" width="1" height="1" fill="#a4a4a4"/><rect x="739" y="626" width="1" height="1" fill="#a4a4a4"/><rect x="817" y="626" width="1" height="1" fill="#a4a4a4"/><rect x="895" y="626" width="1" height="1" fill="#a4a4a4"/><rect x="972" y="626" width="1" height="1" fill="#a4a4a4"/><rect x="38" y="704" width="2" height="1" fill="#a4a4a4"/><rect x="116" y="704" width="1" height="1" fill="#a4a4a4"/><rect x="194" y="704" width="1" height="1" fill="#a4a4a4"/><rect x="272" y="704" width="1" height="1" fill="#a4a4a4"/><rect x="350" y="704" width="1" height="1" fill="#a4a4a4"/><rect x="428" y="704" width="1" height="1" fill="#a4a4a4"/><rect x="506" y="704" width="1" height="1" fill="#a4a4a4"/><rect x="583" y="704" width="1" height="1" fill="#a4a4a4"/><rect x="661" y="704" width="1" height="1" fill="#a4a4a4"/><rect x="739" y="704" width="1" height="1" fill="#a4a4a4"/><rect x="817" y="704" width="1" height="1" fill="#a4a4a4"/><rect x="895" y="704" width="1" height="1" fill="#a4a4a4"/><rect x="972" y="704" width="1" height="1" fill="#a4a4a4"/><rect x="38" y="781" width="2" height="1" fill="#a4a4a4"/><rect x="116" y="781" width="1" height="1" fill="#a4a4a4"/><rect x="194" y="781" width="1" height="1" fill="#a4a4a4"/><rect x="272" y="781" width="1" height="1" fill="#a4a4a4"/><rect x="350" y="781" width="1" height="1" fill="#a4a4a4"/><rect x="428" y="781" width="1" height="1" fill="#a4a4a4"/><rect x="506" y="781" width="1" height="1" fill="#a4a4a4"/><rect x="583" y="781" width="1" height="1" fill="#a4a4a4"/><rect x="661" y="781" width="1" height="1" fill="#a4a4a4"/><rect x="739" y="781" width="1" height="1" fill="#a4a4a4"/><rect x="817" y="781" width="1" height="1" fill="#a4a4a4"/><rect x="895" y="781" width="1" height="1" fill="#a4a4a4"/><rect x="972" y="781" width="1" height="1" fill="#a4a4a4"/><rect x="38" y="859" width="2" height="1" fill="#a4a4a4"/><rect x="116" y="859" width="1" height="1" fill="#a4a4a4"/><rect x="194" y="859" width="1" height="1" fill="#a4a4a4"/><rect x="272" y="859" width="1" height="1" fill="#a4a4a4"/><rect x="350" y="859" width="1" height="1" fill="#a4a4a4"/><rect x="428" y="859" width="1" height="1" fill="#a4a4a4"/><rect x="506" y="859" width="1" height="1" fill="#a4a4a4"/><rect x="583" y="859" width="1" height="1" fill="#a4a4a4"/><rect x="661" y="859" width="1" height="1" fill="#a4a4a4"/><rect x="739" y="859" width="1" height="1" fill="#a4a4a4"/><rect x="817" y="859" width="1" height="1" fill="#a4a4a4"/><rect x="895" y="859" width="1" height="1" fill="#a4a4a4"/><rect x="972" y="859" width="1" height="1" fill="#a4a4a4"/><rect x="38" y="937" width="2" height="1" fill="#a4a4a4"/><rect x="116" y="937" width="1" height="1" fill="#a4a4a4"/><rect x="194" y="937" width="1" height="1" fill="#a4a4a4"/><rect x="272" y="937" width="1" height="1" fill="#a4a4a4"/><rect x="350" y="937" width="1" height="1" fill="#a4a4a4"/><rect x="428" y="937" width="1" height="1" fill="#a4a4a4"/><rect x="506" y="937" width="1" height="1" fill="#a4a4a4"/><rect x="583" y="937" width="1" height="1" fill="#a4a4a4"/><rect x="661" y="937" width="1" height="1" fill="#a4a4a4"/><rect x="739" y="937" width="1" height="1" fill="#a4a4a4"/><rect x="817" y="937" width="1" height="1" fill="#a4a4a4"/><rect x="895" y="937" width="1" height="1" fill="#a4a4a4"/><rect x="972" y="937" width="1" height="1" fill="#a4a4a4"/><rect x="69.5" y="189.5" width="849" height="583" fill="none" stroke="#6c0000" stroke-width="1"/><rect x="75.5" y="196.5" width="837" height="569" fill="none" stroke="#6c0000" stroke-width="1"/><line x1="222.5" y1="189.5" x2="222.5" y2="196.5" stroke="#6c0000" stroke-width="1"/><line x1="222.5" y1="765.5" x2="222.5" y2="772.5" stroke="#6c0000" stroke-width="1"/><line x1="376.5" y1="189.5" x2="376.5" y2="196.5" stroke="#6c0000" stroke-width="1"/><line x1="376.5" y1="765.5" x2="376.5" y2="772.5" stroke="#6c0000" stroke-width="1"/><line x1="529.5" y1="189.5" x2="529.5" y2="196.5" stroke="#6c0000" stroke-width="1"/><line x1="529.5" y1="765.5" x2="529.5" y2="772.5" stroke="#6c0000" stroke-width="1"/><line x1="682.5" y1="189.5" x2="682.5" y2="196.5" stroke="#6c0000" stroke-width="1"/><line x1="682.5" y1="765.5" x2="682.5" y2="772.5" stroke="#6c0000" stroke-width="1"/><line x1="835.5" y1="189.5" x2="835.5" y2="196.5" stroke="#6c0000" stroke-width="1"/><line x1="835.5" y1="765.5" x2="835.5" y2="772.5" stroke="#6c0000" stroke-width="1"/><line x1="69.5" y1="342.5" x2="75.5" y2="342.5" stroke="#6c0000" stroke-width="1"/><line x1="912.5" y1="342.5" x2="918.5" y2="342.5" stroke="#6c0000" stroke-width="1"/><line x1="69.5" y1="496.5" x2="75.5" y2="496.5" stroke="#6c0000" stroke-width="1"/><line x1="912.5" y1="496.5" x2="918.5" y2="496.5" stroke="#6c0000" stroke-width="1"/><line x1="69.5" y1="649.5" x2="75.5" y2="649.5" stroke="#6c0000" stroke-width="1"/><line x1="912.5" y1="649.5" x2="918.5" y2="649.5" stroke="#6c0000" stroke-width="1"/><line x1="581.5" y1="667.5" x2="918" y2="667.5" stroke="#6c0000" stroke-width="1"/><line x1="581.5" y1="667.5" x2="581.5" y2="765.5" stroke="#6c0000" stroke-width="1"/><line x1="581.5" y1="715.5" x2="918" y2="715.5" stroke="#6c0000" stroke-width="1"/><line x1="581.5" y1="733.5" x2="918" y2="733.5" stroke="#6c0000" stroke-width="1"/><line x1="581.5" y1="746.5" x2="918" y2="746.5" stroke="#6c0000" stroke-width="1"/><line x1="581.5" y1="755.5" x2="918" y2="755.5" stroke="#6c0000" stroke-width="1"/><line x1="642.5" y1="746.5" x2="642.5" y2="755.5" stroke="#6c0000" stroke-width="1"/><g shape-rendering="crispEdges"></g><circle cx="605" cy="337" r="190.5" fill="none" stroke="#c4c400" stroke-width="1"/><text x="148" y="195.5" font-size="6.5" font-weight="normal" fill="#6c0000" font-family="Liberation Sans" text-anchor="middle" letter-spacing="0">1</text><text x="148" y="772" font-size="6.5" font-weight="normal" fill="#6c0000" font-family="Liberation Sans" text-anchor="middle" letter-spacing="0">1</text><text x="301.5" y="195.5" font-size="6.5" font-weight="normal" fill="#6c0000" font-family="Liberation Sans" text-anchor="middle" letter-spacing="0">2</text><text x="301.5" y="772" font-size="6.5" font-weight="normal" fill="#6c0000" font-family="Liberation Sans" text-anchor="middle" letter-spacing="0">2</text><text x="454" y="195.5" font-size="6.5" font-weight="normal" fill="#6c0000" font-family="Liberation Sans" text-anchor="middle" letter-spacing="0">3</text><text x="454" y="772" font-size="6.5" font-weight="normal" fill="#6c0000" font-family="Liberation Sans" text-anchor="middle" letter-spacing="0">3</text><text x="607.5" y="195.5" font-size="6.5" font-weight="normal" fill="#6c0000" font-family="Liberation Sans" text-anchor="middle" letter-spacing="0">4</text><text x="607.5" y="772" font-size="6.5" font-weight="normal" fill="#6c0000" font-family="Liberation Sans" text-anchor="middle" letter-spacing="0">4</text><text x="761" y="195.5" font-size="6.5" font-weight="normal" fill="#6c0000" font-family="Liberation Sans" text-anchor="middle" letter-spacing="0">5</text><text x="761" y="772" font-size="6.5" font-weight="normal" fill="#6c0000" font-family="Liberation Sans" text-anchor="middle" letter-spacing="0">5</text><text x="914" y="195.5" font-size="6.5" font-weight="normal" fill="#6c0000" font-family="Liberation Sans" text-anchor="middle" letter-spacing="0">6</text><text x="914" y="772" font-size="6.5" font-weight="normal" fill="#6c0000" font-family="Liberation Sans" text-anchor="middle" letter-spacing="0">6</text><text x="72.5" y="270" font-size="6.5" font-weight="normal" fill="#6c0000" font-family="Liberation Sans" text-anchor="middle" letter-spacing="0">A</text><text x="915.5" y="270" font-size="6.5" font-weight="normal" fill="#6c0000" font-family="Liberation Sans" text-anchor="middle" letter-spacing="0">A</text><text x="72.5" y="423" font-size="6.5" font-weight="normal" fill="#6c0000" font-family="Liberation Sans" text-anchor="middle" letter-spacing="0">B</text><text x="915.5" y="423" font-size="6.5" font-weight="normal" fill="#6c0000" font-family="Liberation Sans" text-anchor="middle" letter-spacing="0">B</text><text x="72.5" y="576" font-size="6.5" font-weight="normal" fill="#6c0000" font-family="Liberation Sans" text-anchor="middle" letter-spacing="0">C</text><text x="915.5" y="576" font-size="6.5" font-weight="normal" fill="#6c0000" font-family="Liberation Sans" text-anchor="middle" letter-spacing="0">C</text><text x="72.5" y="729" font-size="6.5" font-weight="normal" fill="#6c0000" font-family="Liberation Sans" text-anchor="middle" letter-spacing="0">D</text><text x="915.5" y="729" font-size="6.5" font-weight="normal" fill="#6c0000" font-family="Liberation Sans" text-anchor="middle" letter-spacing="0">D</text><text x="584.5" y="723" font-size="7" font-weight="normal" fill="#6c0000" font-family="Liberation Sans" text-anchor="start" letter-spacing="0.3">Sheet</text><text x="584.5" y="731" font-size="7" font-weight="normal" fill="#6c0000" font-family="Liberation Sans" text-anchor="start" letter-spacing="0.2">File: orologio.kicad_pcb</text><text x="586" y="742.5" font-size="8" font-weight="bold" fill="#6c0000" font-family="Liberation Sans" text-anchor="start" letter-spacing="0.3">Title:</text><text x="584.5" y="753.5" font-size="7" font-weight="normal" fill="#6c0000" font-family="Liberation Sans" text-anchor="start" letter-spacing="0.4">Size: A4</text><text x="653" y="753.5" font-size="7" font-weight="normal" fill="#6c0000" font-family="Liberation Sans" text-anchor="start" letter-spacing="0.4">Date:</text><text x="584.5" y="762.5" font-size="7" font-weight="normal" fill="#6c0000" font-family="Liberation Sans" text-anchor="start" letter-spacing="0.2">KiCad E.D.A.  kicad 5.1.5</text><g transform="translate(726,78)"><path d="M0 0 L0.5 -10 L9 -24 A3.2 3.2 0 0 1 14.5 -21 L6 -8Z" fill="#6a6a6a" stroke="#fff" stroke-width="1.1" stroke-linejoin="round" shape-rendering="geometricPrecision"/><path d="M8 -21.5 L13.5 -18.5" stroke="#fff" stroke-width="1.3" shape-rendering="geometricPrecision"/></g><line x1="747.5" y1="40" x2="747.5" y2="120" stroke="#fff" stroke-width="1"/><line x1="708" y1="79.5" x2="788" y2="79.5" stroke="#fff" stroke-width="1"/></svg>
<div style="position:absolute;left:1028px;top:113px;width:12px;height:940px;background:#cecece"></div>
<div style="position:absolute;left:1040px;top:113px;width:38px;height:940px;background:#f0efed"></div>
<div style="position:absolute;left:1078px;top:113px;width:5px;height:940px;background:#dad9d7"></div>
<div style="position:absolute;left:1040px;top:113px;width:1px;height:940px;background:#e4e3e1"></div>
<svg style="position:absolute;left:1050px;top:121px;" width="20" height="24" viewBox="0 0 20 24"><path d="M3 2 V19 L7 15 L10 22 L13 20.5 L10 14 H16Z" fill="#fafafa" stroke="#444" stroke-width="1.1" stroke-linejoin="round"/></svg>
<div style="position:absolute;left:1048px;top:154px;width:24px;height:1px;background:#bdbcba"></div>
<svg style="position:absolute;left:1047px;top:161px;" width="26" height="24" viewBox="0 0 26 24"><path d="M3 9 H24" stroke="#66bb66" stroke-width="2.2"/><path d="M3 16 H24 M18 2 V22" stroke="#bbbbbb" stroke-width="2.2"/><path d="M9 2 V22" stroke="#cc1111" stroke-width="2.2"/><circle cx="9" cy="9" r="3.5" fill="#a08a30"/></svg>
<svg style="position:absolute;left:1047px;top:197px;" width="26" height="26" viewBox="0 0 26 26"><rect x="0" y="0" width="26" height="26" rx="3" fill="#d0d0d0"/><path d="M2 24 L9 13 M9 13 L24 4 M9 13 L19 22 M9 13 L3 6" stroke="#fff" stroke-width="1.5"/><circle cx="9.5" cy="12.5" r="2.8" fill="#fff" stroke="#333" stroke-width="1"/></svg>
<div style="position:absolute;left:1048px;top:231px;width:24px;height:1px;background:#bdbcba"></div>
<svg style="position:absolute;left:1047px;top:241px;" width="26" height="24" viewBox="0 0 26 24"><path d="M2 4 H24 V20 H2 V14 A2 2 0 0 0 2 10Z" fill="#e8e8e8" stroke="#555" stroke-width="1"/><g fill="#22bb22" stroke="#128812" stroke-width="0.8"><rect x="4" y="1" width="4" height="6"/><rect x="11" y="1" width="4" height="6"/><rect x="18" y="1" width="4" height="6"/><rect x="4" y="17" width="4" height="6"/><rect x="11" y="17" width="4" height="6"/><rect x="18" y="17" width="4" height="6"/></g></svg>
<svg style="position:absolute;left:1047px;top:275px;" width="26" height="26" viewBox="0 0 26 26"><path d="M3 3 L8 12 H19 L24 22" fill="none" stroke="#119911" stroke-width="2.6" stroke-linecap="round"/></svg>
<svg style="position:absolute;left:1048px;top:310px;" width="24" height="22" viewBox="0 0 24 22"><circle cx="12" cy="11" r="8.5" fill="#c8c8c8" stroke="#999" stroke-width="1.2"/><circle cx="12" cy="11" r="5.5" fill="#c8c800" stroke="#8c8c00" stroke-width="1"/></svg>
<svg style="position:absolute;left:1047px;top:342px;" width="26" height="26" viewBox="0 0 26 26"><rect x="0.5" y="0.5" width="25" height="25" fill="#5aaa5a" stroke="#119911"/><path d="M18 1 L26 25" stroke="#119911" stroke-width="1"/><circle cx="8" cy="10" r="3.5" fill="#fff" stroke="#888" stroke-width="2.5"/><path d="M11 10 H15 L22 22" fill="none" stroke="#888" stroke-width="2.5" stroke-linecap="round"/></svg>
<svg style="position:absolute;left:1047px;top:375px;" width="26" height="27" viewBox="0 0 26 27"><defs><pattern id="hatch" width="3" height="3" patternUnits="userSpaceOnUse" patternTransform="rotate(45)"><rect width="1.5" height="3" fill="#119911"/></pattern></defs><rect x="0.5" y="0.5" width="25" height="26" fill="url(#hatch)" stroke="#119911"/><rect x="3" y="3" width="20" height="21" fill="#f0f0f0"/><circle cx="13" cy="13.5" r="7.5" fill="#dd3a3a"/><path d="M8.5 17.5 L17.5 9.5" stroke="#fff" stroke-width="2.6"/></svg>
<div style="position:absolute;left:1048px;top:409px;width:24px;height:1px;background:#bdbcba"></div>
<svg style="position:absolute;left:1047px;top:419px;" width="26" height="26" viewBox="0 0 26 26"><path d="M5 3 L17 5 L21 18 L4 22" fill="none" stroke="#1111bb" stroke-width="2"/><g fill="#33bb33"><circle cx="5" cy="3" r="2.7"/><circle cx="17" cy="5" r="2.7"/><circle cx="21" cy="18" r="2.7"/><circle cx="4" cy="22" r="2.7"/></g></svg>
<div style="position:absolute;left:1044px;top:450px;width:32px;height:32px;background:#c5dbf3;border:1px solid #3c8ce6"></div>
<svg style="position:absolute;left:1047px;top:452px;" width="26" height="28" viewBox="0 0 26 28"><circle cx="13" cy="14" r="10" fill="none" stroke="#1111bb" stroke-width="2"/><circle cx="13" cy="14" r="2.7" fill="#33bb33"/><circle cx="19" cy="7" r="2.7" fill="#33bb33"/></svg>
<svg style="position:absolute;left:1047px;top:487px;" width="26" height="26" viewBox="0 0 26 26"><path d="M5 3 A17 17 0 0 1 22 20" fill="none" stroke="#1111bb" stroke-width="2"/><g fill="#33bb33"><circle cx="5" cy="3" r="2.7"/><circle cx="22" cy="20" r="2.7"/><circle cx="5" cy="20" r="2.7"/></g></svg>
<svg style="position:absolute;left:1047px;top:522px;" width="26" height="24" viewBox="0 0 26 24"><path d="M4 2 L17 3 L22 16 L4 22Z" fill="#7777ee" stroke="#1111bb" stroke-width="1.8"/></svg>
<svg style="position:absolute;left:1047px;top:556px;" width="26" height="24" viewBox="0 0 26 24"><text x="13" y="21" font-size="25" font-family="Liberation Serif" text-anchor="middle" fill="#222">T</text></svg>
<div style="position:absolute;left:1048px;top:589px;width:24px;height:1px;background:#bdbcba"></div>
<svg style="position:absolute;left:1045px;top:598px;" width="30" height="26" viewBox="0 0 30 26"><text x="15" y="11" font-size="12" font-family="Liberation Sans" text-anchor="middle" fill="#333">N</text><path d="M4 11 V25 M26 11 V25" stroke="#1111bb" stroke-width="2.4"/><path d="M6 15 H24" stroke="#222" stroke-width="1"/><path d="M5 15 L9 13 V17Z M25 15 L21 13 V17Z" fill="#222"/></svg>
<div style="position:absolute;left:1032px;top:612px;width:7px;height:30px;background:#9e9e9e;border-radius:3px"></div>
<div style="position:absolute;left:1083px;top:112px;width:175px;height:941px;background:#f5f4f2"></div>
<div style="position:absolute;left:1083px;top:112px;width:175px;height:17px;background:linear-gradient(#d8d8d8,#c4c4c4)"></div>
<div style="position:absolute;left:1087px;top:113px;font-size:12px;line-height:14px;color:#1c1c1c;white-space:nowrap;">Layers Manager</div>
<div style="position:absolute;left:1083px;top:129px;width:175px;height:27px;background:linear-gradient(#d6d6d6,#ebebeb)"></div>
<div style="position:absolute;left:1083px;top:153px;width:175px;height:1px;background:#c4c4c4"></div>
<div style="position:absolute;left:1083px;top:156px;width:175px;height:1px;background:#b9b9b9"></div>
<div style="position:absolute;left:1083px;top:129px;width:1px;height:924px;background:#c6c6c6"></div>
<div style="position:absolute;left:1257px;top:129px;width:1px;height:924px;background:#c6c6c6"></div>
<div style="position:absolute;left:1083px;top:129px;width:175px;height:1px;background:#c6c6c6"></div>
<div style="position:absolute;left:1090px;top:134px;width:54px;height:22px;background:linear-gradient(#ffffff,#ececec);border:1px solid #c0c0c0;border-bottom:none;border-radius:3px 3px 0 0"></div>
<div style="position:absolute;left:1097px;top:136px;font-size:13px;line-height:15px;color:#1c1c1c;white-space:nowrap;">Layers</div>
<div style="position:absolute;left:1145px;top:135px;width:50px;height:19px;background:linear-gradient(#eeeeee,#dddddd);border:1px solid #c4c4c4;border-bottom:none;border-radius:3px 3px 0 0"></div>
<div style="position:absolute;left:1152px;top:136px;font-size:13px;line-height:15px;color:#1c1c1c;white-space:nowrap;">Items</div>
<div style="position:absolute;left:1098px;top:163px;width:14px;height:11px;background:#840000;border:1px solid #000"></div>
<svg style="position:absolute;left:1113px;top:161px;" width="16" height="16" viewBox="0 0 16 16"><rect x="0.5" y="0.5" width="15" height="15" rx="3" fill="#4a90d9" stroke="#3b7fc9"/><path d="M3.2 7.8 L6.6 11.2 L12.8 4.2" fill="none" stroke="#fff" stroke-width="2.6"/></svg>
<div style="position:absolute;left:1130px;top:161px;font-size:13px;line-height:15px;color:#2e3436;white-space:nowrap;">F.Cu</div>
<div style="position:absolute;left:1098px;top:183px;width:14px;height:11px;background:#008400;border:1px solid #000"></div>
<svg style="position:absolute;left:1113px;top:181px;" width="16" height="16" viewBox="0 0 16 16"><rect x="0.5" y="0.5" width="15" height="15" rx="3" fill="#4a90d9" stroke="#3b7fc9"/><path d="M3.2 7.8 L6.6 11.2 L12.8 4.2" fill="none" stroke="#fff" stroke-width="2.6"/></svg>
<div style="position:absolute;left:1130px;top:181px;font-size:13px;line-height:15px;color:#2e3436;white-space:nowrap;">B.Cu</div>
<div style="position:absolute;left:1098px;top:203px;width:14px;height:11px;background:#840084;border:1px solid #000"></div>
<svg style="position:absolute;left:1113px;top:201px;" width="16" height="16" viewBox="0 0 16 16"><rect x="0.5" y="0.5" width="15" height="15" rx="3" fill="#4a90d9" stroke="#3b7fc9"/><path d="M3.2 7.8 L6.6 11.2 L12.8 4.2" fill="none" stroke="#fff" stroke-width="2.6"/></svg>
<div style="position:absolute;left:1130px;top:201px;font-size:13px;line-height:15px;color:#2e3436;white-space:nowrap;">F.Adhes</div>
<div style="position:absolute;left:1098px;top:223px;width:14px;height:11px;background:#000084;border:1px solid #000"></div>
<svg style="position:absolute;left:1113px;top:221px;" width="16" height="16" viewBox="0 0 16 16"><rect x="0.5" y="0.5" width="15" height="15" rx="3" fill="#4a90d9" stroke="#3b7fc9"/><path d="M3.2 7.8 L6.6 11.2 L12.8 4.2" fill="none" stroke="#fff" stroke-width="2.6"/></svg>
<div style="position:absolute;left:1130px;top:221px;font-size:13px;line-height:15px;color:#2e3436;white-space:nowrap;">B.Adhes</div>
<div style="position:absolute;left:1098px;top:243px;width:14px;height:11px;background:#840000;border:1px solid #000"></div>
<svg style="position:absolute;left:1113px;top:241px;" width="16" height="16" viewBox="0 0 16 16"><rect x="0.5" y="0.5" width="15" height="15" rx="3" fill="#4a90d9" stroke="#3b7fc9"/><path d="M3.2 7.8 L6.6 11.2 L12.8 4.2" fill="none" stroke="#fff" stroke-width="2.6"/></svg>
<div style="position:absolute;left:1130px;top:241px;font-size:13px;line-height:15px;color:#2e3436;white-space:nowrap;">F.Paste</div>
<div style="position:absolute;left:1098px;top:263px;width:14px;height:11px;background:#00c2c2;border:1px solid #000"></div>
<svg style="position:absolute;left:1113px;top:261px;" width="16" height="16" viewBox="0 0 16 16"><rect x="0.5" y="0.5" width="15" height="15" rx="3" fill="#4a90d9" stroke="#3b7fc9"/><path d="M3.2 7.8 L6.6 11.2 L12.8 4.2" fill="none" stroke="#fff" stroke-width="2.6"/></svg>
<div style="position:absolute;left:1130px;top:261px;font-size:13px;line-height:15px;color:#2e3436;white-space:nowrap;">B.Paste</div>
<div style="position:absolute;left:1098px;top:283px;width:14px;height:11px;background:#008484;border:1px solid #000"></div>
<svg style="position:absolute;left:1113px;top:281px;" width="16" height="16" viewBox="0 0 16 16"><rect x="0.5" y="0.5" width="15" height="15" rx="3" fill="#4a90d9" stroke="#3b7fc9"/><path d="M3.2 7.8 L6.6 11.2 L12.8 4.2" fill="none" stroke="#fff" stroke-width="2.6"/></svg>
<div style="position:absolute;left:1130px;top:281px;font-size:13px;line-height:15px;color:#2e3436;white-space:nowrap;">F.SilkS</div>
<div style="position:absolute;left:1098px;top:303px;width:14px;height:11px;background:#840084;border:1px solid #000"></div>
<svg style="position:absolute;left:1113px;top:301px;" width="16" height="16" viewBox="0 0 16 16"><rect x="0.5" y="0.5" width="15" height="15" rx="3" fill="#4a90d9" stroke="#3b7fc9"/><path d="M3.2 7.8 L6.6 11.2 L12.8 4.2" fill="none" stroke="#fff" stroke-width="2.6"/></svg>
<div style="position:absolute;left:1130px;top:301px;font-size:13px;line-height:15px;color:#2e3436;white-space:nowrap;">B.SilkS</div>
<div style="position:absolute;left:1098px;top:323px;width:14px;height:11px;background:#840084;border:1px solid #000"></div>
<svg style="position:absolute;left:1113px;top:321px;" width="16" height="16" viewBox="0 0 16 16"><rect x="0.5" y="0.5" width="15" height="15" rx="3" fill="#4a90d9" stroke="#3b7fc9"/><path d="M3.2 7.8 L6.6 11.2 L12.8 4.2" fill="none" stroke="#fff" stroke-width="2.6"/></svg>
<div style="position:absolute;left:1130px;top:321px;font-size:13px;line-height:15px;color:#2e3436;white-space:nowrap;">F.Mask</div>
<div style="position:absolute;left:1098px;top:343px;width:14px;height:11px;background:#848400;border:1px solid #000"></div>
<svg style="position:absolute;left:1113px;top:341px;" width="16" height="16" viewBox="0 0 16 16"><rect x="0.5" y="0.5" width="15" height="15" rx="3" fill="#4a90d9" stroke="#3b7fc9"/><path d="M3.2 7.8 L6.6 11.2 L12.8 4.2" fill="none" stroke="#fff" stroke-width="2.6"/></svg>
<div style="position:absolute;left:1130px;top:341px;font-size:13px;line-height:15px;color:#2e3436;white-space:nowrap;">B.Mask</div>
<div style="position:absolute;left:1098px;top:363px;width:14px;height:11px;background:#c2c2c2;border:1px solid #000"></div>
<svg style="position:absolute;left:1113px;top:361px;" width="16" height="16" viewBox="0 0 16 16"><rect x="0.5" y="0.5" width="15" height="15" rx="3" fill="#4a90d9" stroke="#3b7fc9"/><path d="M3.2 7.8 L6.6 11.2 L12.8 4.2" fill="none" stroke="#fff" stroke-width="2.6"/></svg>
<div style="position:absolute;left:1130px;top:361px;font-size:13px;line-height:15px;color:#2e3436;white-space:nowrap;">Dwgs.User</div>
<div style="position:absolute;left:1098px;top:383px;width:14px;height:11px;background:#000084;border:1px solid #000"></div>
<svg style="position:absolute;left:1113px;top:381px;" width="16" height="16" viewBox="0 0 16 16"><rect x="0.5" y="0.5" width="15" height="15" rx="3" fill="#4a90d9" stroke="#3b7fc9"/><path d="M3.2 7.8 L6.6 11.2 L12.8 4.2" fill="none" stroke="#fff" stroke-width="2.6"/></svg>
<div style="position:absolute;left:1130px;top:381px;font-size:13px;line-height:15px;color:#2e3436;white-space:nowrap;">Cmts.User</div>
<div style="position:absolute;left:1098px;top:403px;width:14px;height:11px;background:#008400;border:1px solid #000"></div>
<svg style="position:absolute;left:1113px;top:401px;" width="16" height="16" viewBox="0 0 16 16"><rect x="0.5" y="0.5" width="15" height="15" rx="3" fill="#4a90d9" stroke="#3b7fc9"/><path d="M3.2 7.8 L6.6 11.2 L12.8 4.2" fill="none" stroke="#fff" stroke-width="2.6"/></svg>
<div style="position:absolute;left:1130px;top:401px;font-size:13px;line-height:15px;color:#2e3436;white-space:nowrap;">Eco1.User</div>
<div style="position:absolute;left:1098px;top:423px;width:14px;height:11px;background:#c2c200;border:1px solid #000"></div>
<svg style="position:absolute;left:1113px;top:421px;" width="16" height="16" viewBox="0 0 16 16"><rect x="0.5" y="0.5" width="15" height="15" rx="3" fill="#4a90d9" stroke="#3b7fc9"/><path d="M3.2 7.8 L6.6 11.2 L12.8 4.2" fill="none" stroke="#fff" stroke-width="2.6"/></svg>
<div style="position:absolute;left:1130px;top:421px;font-size:13px;line-height:15px;color:#2e3436;white-space:nowrap;">Eco2.User</div>
<div style="position:absolute;left:1098px;top:443px;width:14px;height:11px;background:#c2c200;border:1px solid #000"></div>
<svg style="position:absolute;left:1113px;top:441px;" width="16" height="16" viewBox="0 0 16 16"><rect x="0.5" y="0.5" width="15" height="15" rx="3" fill="#4a90d9" stroke="#3b7fc9"/><path d="M3.2 7.8 L6.6 11.2 L12.8 4.2" fill="none" stroke="#fff" stroke-width="2.6"/></svg>
<div style="position:absolute;left:1130px;top:441px;font-size:13px;line-height:15px;color:#2e3436;white-space:nowrap;">Edge.Cuts</div>
<svg style="position:absolute;left:1091px;top:444px;" width="6" height="9" viewBox="0 0 6 9"><path d="M0 0 L6 4.5 L0 9Z" fill="#3b3bff"/></svg>
<div style="position:absolute;left:1098px;top:463px;width:14px;height:11px;background:#c200c2;border:1px solid #000"></div>
<svg style="position:absolute;left:1113px;top:461px;" width="16" height="16" viewBox="0 0 16 16"><rect x="0.5" y="0.5" width="15" height="15" rx="3" fill="#4a90d9" stroke="#3b7fc9"/><path d="M3.2 7.8 L6.6 11.2 L12.8 4.2" fill="none" stroke="#fff" stroke-width="2.6"/></svg>
<div style="position:absolute;left:1130px;top:461px;font-size:13px;line-height:15px;color:#2e3436;white-space:nowrap;">Margin</div>
<div style="position:absolute;left:1098px;top:483px;width:14px;height:11px;background:#c2c2c2;border:1px solid #000"></div>
<svg style="position:absolute;left:1113px;top:481px;" width="16" height="16" viewBox="0 0 16 16"><rect x="0.5" y="0.5" width="15" height="15" rx="3" fill="#4a90d9" stroke="#3b7fc9"/><path d="M3.2 7.8 L6.6 11.2 L12.8 4.2" fill="none" stroke="#fff" stroke-width="2.6"/></svg>
<div style="position:absolute;left:1130px;top:481px;font-size:13px;line-height:15px;color:#2e3436;white-space:nowrap;">F.CrtYd</div>
<div style="position:absolute;left:1098px;top:503px;width:14px;height:11px;background:#848484;border:1px solid #000"></div>
<svg style="position:absolute;left:1113px;top:501px;" width="16" height="16" viewBox="0 0 16 16"><rect x="0.5" y="0.5" width="15" height="15" rx="3" fill="#4a90d9" stroke="#3b7fc9"/><path d="M3.2 7.8 L6.6 11.2 L12.8 4.2" fill="none" stroke="#fff" stroke-width="2.6"/></svg>
<div style="position:absolute;left:1130px;top:501px;font-size:13px;line-height:15px;color:#2e3436;white-space:nowrap;">B.CrtYd</div>
<div style="position:absolute;left:1098px;top:523px;width:14px;height:11px;background:#848484;border:1px solid #000"></div>
<svg style="position:absolute;left:1113px;top:521px;" width="16" height="16" viewBox="0 0 16 16"><rect x="0.5" y="0.5" width="15" height="15" rx="3" fill="#4a90d9" stroke="#3b7fc9"/><path d="M3.2 7.8 L6.6 11.2 L12.8 4.2" fill="none" stroke="#fff" stroke-width="2.6"/></svg>
<div style="position:absolute;left:1130px;top:521px;font-size:13px;line-height:15px;color:#2e3436;white-space:nowrap;">F.Fab</div>
<div style="position:absolute;left:1098px;top:543px;width:14px;height:11px;background:#000084;border:1px solid #000"></div>
<svg style="position:absolute;left:1113px;top:541px;" width="16" height="16" viewBox="0 0 16 16"><rect x="0.5" y="0.5" width="15" height="15" rx="3" fill="#4a90d9" stroke="#3b7fc9"/><path d="M3.2 7.8 L6.6 11.2 L12.8 4.2" fill="none" stroke="#fff" stroke-width="2.6"/></svg>
<div style="position:absolute;left:1130px;top:541px;font-size:13px;line-height:15px;color:#2e3436;white-space:nowrap;">B.Fab</div>
<div style="position:absolute;left:757px;top:626px;width:500px;height:400px;background:#f0efed;border:1px solid #b6b5b3;box-shadow:1px 4px 10px rgba(0,0,0,0.35)"></div>
<div style="position:absolute;left:758px;top:627px;width:498px;height:15px;background:#e6e6e6"></div>
<div style="position:absolute;left:758px;top:626px;font-size:12px;line-height:14px;color:#3a3a3a;white-space:nowrap;font-weight:bold;width:462px;text-align:center;line-height:14px;letter-spacing:0.3px">3D Viewer</div>
<svg style="position:absolute;left:761px;top:629px;" width="10" height="9" viewBox="0 0 10 9"><path d="M1 3 L8 1 L9 5 L2 7Z" fill="#333"/><path d="M2 7 V9 M5 6 V8 M8 5 V7" stroke="#555"/></svg>
<svg style="position:absolute;left:1205px;top:629px;" width="50" height="11" viewBox="0 0 50 11"><rect x="0" y="0" width="10" height="10" fill="#3a3a3a"/><rect x="1" y="1" width="8" height="2" fill="#8cc6f0"/><rect x="13" y="0" width="10" height="10" fill="#3a3a3a"/><rect x="14" y="7" width="8" height="2" fill="#f0e070"/><rect x="26" y="0" width="10" height="10" fill="#3a3a3a"/><rect x="27.5" y="1.5" width="7" height="7" fill="none" stroke="#c8f070" stroke-width="1.3"/><rect x="39" y="0" width="10" height="10" fill="#3a3a3a"/><path d="M40.5 1.5 L47.5 8.5 M47.5 1.5 L40.5 8.5" stroke="#f08ac0" stroke-width="2"/></svg>
<div style="position:absolute;left:758px;top:642px;width:498px;height:23px;background:#f5f4f2"></div>
<div style="position:absolute;left:758px;top:665px;width:498px;height:1px;background:#dcdad6"></div>
<div style="position:absolute;left:767px;top:646px;font-size:13px;line-height:15px;color:#2e3436;white-space:nowrap;">File</div>
<div style="position:absolute;left:802px;top:646px;font-size:13px;line-height:15px;color:#2e3436;white-space:nowrap;">Edit</div>
<div style="position:absolute;left:842px;top:646px;font-size:13px;line-height:15px;color:#2e3436;white-space:nowrap;">View</div>
<div style="position:absolute;left:886px;top:646px;font-size:13px;line-height:15px;color:#2e3436;white-space:nowrap;">Preferences</div>
<div style="position:absolute;left:972px;top:646px;font-size:13px;line-height:15px;color:#2e3436;white-space:nowrap;">Help</div>
<svg style="position:absolute;left:766px;top:671px;" width="28" height="27" viewBox="0 0 28 27"><rect x="1" y="2" width="15" height="14" rx="2" fill="#555"/><ellipse cx="8.5" cy="16" rx="7.5" ry="2" fill="#333"/><ellipse cx="8.5" cy="3" rx="7.5" ry="2" fill="#777"/><path d="M5 18 V26 M11 18 V26" stroke="#222" stroke-width="1.4"/><rect x="0" y="19" width="25" height="3" fill="#22aa22"/><path d="M14 6 L19 1 V4 H25 V9 H19 V12Z" fill="#11dddd" stroke="#117777" stroke-width="0.8"/></svg>
<div style="position:absolute;left:801px;top:671px;width:1px;height:26px;background:#bdbcba"></div>
<svg style="position:absolute;left:811px;top:671px;" width="26" height="26" viewBox="0 0 26 26"><rect x="2" y="1" width="13" height="15" fill="#f0f0f0" stroke="#ccc"/><path d="M4 5 H13 M4 8 H13 M4 11 H13" stroke="#d0d0d0" stroke-width="2"/><rect x="9" y="8" width="14" height="16" fill="#f0f0f0" stroke="#ccc"/><path d="M11 12 H21 M11 15 H21 M11 18 H21" stroke="#d0d0d0" stroke-width="2"/></svg>
<div style="position:absolute;left:844px;top:671px;width:1px;height:26px;background:#bdbcba"></div>
<svg style="position:absolute;left:852px;top:671px;" width="28" height="27" viewBox="0 0 28 27"><g transform="translate(11,15)"><path d="M-2 -10 H2 L3 -7 L6 -9 L9 -6 L7 -3 L10 -2 V2 L7 3 L9 6 L6 9 L3 7 L2 10 H-2 L-3 7 L-6 9 L-9 6 L-7 3 L-10 2 V-2 L-7 -3 L-9 -6 L-6 -9 L-3 -7Z" fill="#aaa" stroke="#222" stroke-width="1"/><circle r="3.5" fill="#f0efed" stroke="#333"/></g><path d="M13 7 L19 1 V4 H26 V10 H19 V13Z" fill="#11cccc" stroke="#117777" stroke-width="0.8"/></svg>
<div style="position:absolute;left:887px;top:671px;width:1px;height:26px;background:#bdbcba"></div>
<svg style="position:absolute;left:897px;top:671px;" width="26" height="27" viewBox="0 0 26 27"><path d="M2 7 L10 2 L22 4 V18 L14 25 L2 22Z" fill="#4aa0cc" stroke="#1a5577" stroke-width="1"/><path d="M2 7 L14 9 L22 4 M14 9 V25" stroke="#1a5577" stroke-width="1" fill="none"/><path d="M10 2 V19 L2 22 M10 19 L22 18" stroke="#1a5577" stroke-width="0.6" stroke-dasharray="1.5 1" fill="none"/></svg>
<div style="position:absolute;left:930px;top:671px;width:1px;height:26px;background:#bdbcba"></div>
<svg style="position:absolute;left:942px;top:674px;" width="24" height="24" viewBox="0 0 24 24"><circle cx="10" cy="10" r="8.2" fill="none" stroke="#333" stroke-width="1.8"/><path d="M5.5 10 H14.5 M10 5.5 V14.5" stroke="#333" stroke-width="2.2"/><path d="M16 16 L21 21" stroke="#333" stroke-width="3.2" stroke-linecap="round"/></svg>
<svg style="position:absolute;left:976px;top:674px;" width="24" height="24" viewBox="0 0 24 24"><circle cx="10" cy="10" r="8.2" fill="none" stroke="#333" stroke-width="1.8"/><path d="M5.5 10 H14.5" stroke="#333" stroke-width="2.2"/><path d="M16 16 L21 21" stroke="#333" stroke-width="3.2" stroke-linecap="round"/></svg>
<svg style="position:absolute;left:1009px;top:673px;" width="24" height="22" viewBox="0 0 24 22"><path d="M13 18 A8 8 0 1 1 16 7" fill="none" stroke="#333" stroke-width="1.8"/><path d="M12.5 7 H20 L16.5 13Z" fill="#333" transform="rotate(10 16 9)"/></svg>
<svg style="position:absolute;left:1044px;top:674px;" width="24" height="24" viewBox="0 0 24 24"><circle cx="10" cy="10" r="8.2" fill="none" stroke="#333" stroke-width="1.8"/><rect x="6" y="6" width="8" height="8" fill="#e8e8e8" stroke="#666" stroke-width="1.2"/><path d="M16 16 L21 21" stroke="#333" stroke-width="3.2" stroke-linecap="round"/></svg>
<div style="position:absolute;left:1075px;top:671px;width:1px;height:26px;background:#bdbcba"></div>
<svg style="position:absolute;left:1084px;top:671px;" width="28" height="28" viewBox="0 0 28 28"><path d="M1 3 L7.5 11 M7.5 3 L1 11" stroke="#dd0000" stroke-width="1.4"/><path d="M10 0.5 V16" stroke="#a8a8a8" stroke-width="1.3"/><path d="M10 16 L1.5 24.5" stroke="#888" stroke-width="1"/><path d="M10 16 H26" stroke="#dd2020" stroke-width="1.6"/><path d="M23 10 A5 8.5 0 1 0 22.5 23" fill="none" stroke="#dd0000" stroke-width="1.6"/><path d="M19.5 5.5 L24 7 L23.5 13Z" fill="#dd0000"/></svg>
<svg style="position:absolute;left:1118px;top:671px;" width="28" height="28" viewBox="0 0 28 28"><path d="M1 3 L7.5 11 M7.5 3 L1 11" stroke="#dd0000" stroke-width="1.4"/><path d="M10 0.5 V16" stroke="#a8a8a8" stroke-width="1.3"/><path d="M10 16 L1.5 24.5" stroke="#888" stroke-width="1"/><path d="M10 16 H26" stroke="#dd2020" stroke-width="1.6"/><path d="M22.5 9 A5 8.5 0 1 0 23 22" fill="none" stroke="#dd0000" stroke-width="1.6"/><path d="M19.5 26.5 L24 25 L23.5 19Z" fill="#dd0000"/></svg>
<div style="position:absolute;left:1152px;top:671px;width:1px;height:26px;background:#bdbcba"></div>
<svg style="position:absolute;left:1161px;top:671px;" width="28" height="28" viewBox="0 0 28 28"><path d="M13.7 1 V13.4 H25" stroke="#a8a8a8" stroke-width="1.2" fill="none"/><path d="M17 2 L20.6 7 L24.3 2 M20.6 7 V11.5" stroke="#119911" stroke-width="1.4" fill="none"/><g transform="rotate(40 11 19)"><path d="M4 17 A7.5 5 0 1 1 9 23.5" fill="none" stroke="#119911" stroke-width="1.6"/></g><path d="M0.5 13 L5.5 12.5 L4 18.5Z" fill="#119911"/><path d="M2 25 L11.5 16" stroke="#119911" stroke-width="1.6"/></svg>
<svg style="position:absolute;left:1195px;top:671px;" width="28" height="28" viewBox="0 0 28 28"><path d="M13.7 1 V13.4 H25" stroke="#a8a8a8" stroke-width="1.2" fill="none"/><path d="M17 2 L20.6 7 L24.3 2 M20.6 7 V11.5" stroke="#119911" stroke-width="1.4" fill="none"/><g transform="rotate(40 11 19)"><path d="M11 24 A7.5 5 0 1 1 16.5 24" fill="none" stroke="#119911" stroke-width="1.6"/></g><path d="M8 20.5 L13.5 22 L11 26Z" fill="#119911"/><path d="M2 25 L11.5 16" stroke="#119911" stroke-width="1.6"/></svg>
<div style="position:absolute;left:1229px;top:671px;width:1px;height:26px;background:#bdbcba"></div>
<div style="position:absolute;left:759px;top:702px;width:496px;height:302px;border:1px solid #a0a09c;background:linear-gradient(#ccccE6,#666680)"></div>
<svg style="position:absolute;left:760px;top:703px" width="494" height="300" viewBox="0 0 494 300"><g transform="translate(250.3,159.3) rotate(-22.3)"><ellipse cx="0.6" cy="1.6" rx="91.9" ry="48.6" fill="#4a3f22"/><ellipse cx="0" cy="0" rx="91.9" ry="48.6" fill="#17251a"/></g><circle cx="18.5" cy="275.3" r="2.2" fill="#00bb00"/><path d="M16 262 L23.5 268.3 L15.5 271.5Z" fill="#0000ee"/><path d="M17 270 L20.5 268.5 L23.5 278 L21.5 278.8Z" fill="#0000dd"/><path d="M22.5 279 L21.5 276.5 L29 271 L30.5 273Z" fill="#ee0000"/><path d="M27.5 270 L35.5 270 L31 276Z" fill="#dd0000"/></svg>
<div style="position:absolute;left:758px;top:1003px;width:498px;height:22px;background:#f5f4f2"></div>
<div style="position:absolute;left:764px;top:1007px;font-size:13px;line-height:15px;color:#2e3436;white-space:nowrap;">Render...</div>
<div style="position:absolute;left:830px;top:1007px;font-size:13px;line-height:15px;color:#2e3436;white-space:nowrap;letter-spacing:0.6px">dx 0.00</div>
<div style="position:absolute;left:960px;top:1007px;font-size:13px;line-height:15px;color:#2e3436;white-space:nowrap;letter-spacing:0.6px">dy 0.00</div>
<svg style="position:absolute;left:1236px;top:1007px;" width="16" height="16" viewBox="0 0 16 16"><path d="M15 2 L2 15 M15 7 L7 15 M15 12 L12 15" stroke="#999" stroke-width="1.2"/></svg>
</body></html>
